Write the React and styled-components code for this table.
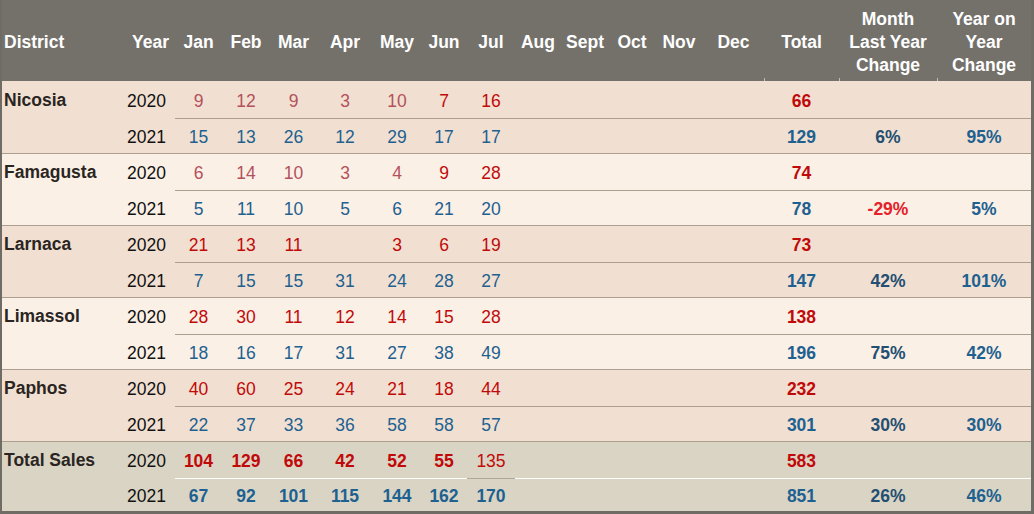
import React from 'react'
import styled, { createGlobalStyle } from 'styled-components'

const GlobalStyle = createGlobalStyle`
    body {
        margin: 0;
        background: #ffffff;
        font-family: "Liberation Sans", Arial, sans-serif;
    }
`

const COLS = '57px 47px 48px 47px 56px 48px 46px 48px 46px 48px 46px 48px 61px 75px 98px 1fr'
const MONTHS = ['Jan', 'Feb', 'Mar', 'Apr', 'May', 'Jun', 'Jul', 'Aug', 'Sept', 'Oct', 'Nov', 'Dec']
const RULE = '#ad9f90'

// tone: m = muted red, r = red, b = blue
const groups = [
    {
        name: 'Nicosia', bg: '#f1e0d1',
        rows: [
            { year: 2020, tone: 'r', cells: [['9', 'm'], ['12', 'm'], ['9', 'm'], ['3', 'm'], ['10', 'm'], '7', '16'], total: '66' },
            { year: 2021, tone: 'b', cells: ['15', '13', '26', '12', '29', '17', '17'], total: '129', mly: '6%', yoy: '95%' },
        ],
    },
    {
        name: 'Famagusta', bg: '#fbf0e6',
        rows: [
            { year: 2020, tone: 'r', cells: [['6', 'm'], ['14', 'm'], ['10', 'm'], ['3', 'm'], ['4', 'm'], '9', '28'], total: '74' },
            { year: 2021, tone: 'b', cells: ['5', '11', '10', '5', '6', '21', '20'], total: '78', mly: '-29%', mlyNeg: true, yoy: '5%' },
        ],
    },
    {
        name: 'Larnaca', bg: '#f1e0d1',
        rows: [
            { year: 2020, tone: 'r', cells: ['21', '13', '11', '', '3', '6', '19'], total: '73' },
            { year: 2021, tone: 'b', cells: ['7', '15', '15', '31', '24', '28', '27'], total: '147', mly: '42%', yoy: '101%' },
        ],
    },
    {
        name: 'Limassol', bg: '#fbf0e6',
        rows: [
            { year: 2020, tone: 'r', cells: ['28', '30', '11', '12', '14', '15', '28'], total: '138' },
            { year: 2021, tone: 'b', cells: ['18', '16', '17', '31', '27', '38', '49'], total: '196', mly: '75%', yoy: '42%' },
        ],
    },
    {
        name: 'Paphos', bg: '#f1e0d1',
        rows: [
            { year: 2020, tone: 'r', cells: ['40', '60', '25', '24', '21', '18', '44'], total: '232' },
            { year: 2021, tone: 'b', cells: ['22', '37', '33', '36', '58', '58', '57'], total: '301', mly: '30%', yoy: '30%' },
        ],
    },
]

const totals = {
    name: 'Total Sales', bg: '#dad4c4', summary: true,
    rows: [
        { year: 2020, tone: 'r', bold: true, cells: ['104', '129', '66', '42', '52', '55', ['135', 'r', false]], total: '583' },
        { year: 2021, tone: 'b', bold: true, cells: ['67', '92', '101', '115', '144', '162', '170'], total: '851', mly: '26%', yoy: '46%' },
    ],
}

const SalesTable = () => {
    return (
        <Frame>
            <HeaderRow>
                <HeadDistrict>District</HeadDistrict>
                <HeadGrid>
                    <HeadYear>Year</HeadYear>
                    {MONTHS.map(m => <HeadCell key={m}>{m}</HeadCell>)}
                    <HeadCell $tick>Total</HeadCell>
                    <HeadCell $tick>Month<br />Last Year<br />Change</HeadCell>
                    <HeadCell $tick>Year on<br />Year<br />Change</HeadCell>
                </HeadGrid>
            </HeaderRow>
            {groups.map((g, i) => <Group key={g.name} group={g} top={i > 0} />)}
            <Group group={totals} top />
        </Frame>
    )
}

const Group = ({ group, top }) => {
    const inner = group.summary ? '#ffffff' : RULE
    return (
        <GroupBox $bg={group.bg} $last={group.summary}>
            <DistrictCell $top={top}>{group.name}</DistrictCell>
            <Rows>
                {group.rows.map((row, i) => {
                    const second = i === 1
                    const line = second ? inner : 'transparent'
                    const months = MONTHS.map((_, idx) => row.cells[idx] ?? '')
                    return (
                        <YearRow key={row.year} $top={!second && top} $grow={second && group.summary}>
                            <YearCell>{row.year}</YearCell>
                            {months.map((c, idx) => {
                                const [text, tone, bold] = Array.isArray(c) ? c : [c, row.tone, row.bold]
                                const cellLine = group.summary && second && idx === 6 ? '#b0a898' : line
                                return (
                                    <Value key={idx} $tone={tone} $bold={bold} $line={cellLine}>{text}</Value>
                                )
                            })}
                            <Value $tone={row.tone} $bold $line={line}>{row.total}</Value>
                            <Value $tone={row.mlyNeg ? 'n' : 'd'} $bold $line={line}>{row.mly}</Value>
                            <Value $tone="b" $bold $line={line}>{row.yoy}</Value>
                        </YearRow>
                    )
                })}
            </Rows>
        </GroupBox>
    )
}

const toneColor = {
    m: '#b4515c',
    r: '#c00a0a',
    b: '#1e6190',
    d: '#244f72',
    n: '#e3222a',
}

const Frame = styled.div`
    width: 1034px;
    height: 514px;
    overflow: hidden;
    display: flex;
    flex-direction: column;
    border-left: 2px solid #6f6c66;
    border-right: 3px solid #6f6c66;
    border-bottom: 3px solid #6f6c66;
    box-sizing: border-box;
    font-size: 17.5px;
    color: #1a1a1a;
`

const HeaderRow = styled.div`
    display: flex;
    height: 81px;
    flex-shrink: 0;
    background: #74716b;
    color: #ffffff;
    font-weight: bold;
`

const HeadDistrict = styled.div`
    width: 116px;
    flex-shrink: 0;
    display: flex;
    align-items: center;
    padding: 3px 0 0 2px;
    box-sizing: border-box;
`

const HeadGrid = styled.div`
    flex: 1;
    display: grid;
    grid-template-columns: ${COLS};
`

const HeadCell = styled.div`
    position: relative;
    display: flex;
    align-items: center;
    justify-content: center;
    text-align: center;
    padding-top: 3px;
    line-height: 23px;
    &::before {
        content: '';
        display: ${p => p.$tick ? 'block' : 'none'};
        position: absolute;
        left: 0;
        bottom: 0;
        width: 1px;
        height: 3px;
        background: #c8bcae;
    }
`

const HeadYear = styled(HeadCell)`
    justify-content: flex-end;
    padding-right: 6px;
`

const GroupBox = styled.div`
    display: flex;
    flex: ${p => p.$last ? '1 1 0' : '0 0 72px'};
    min-height: 0;
    background: ${p => p.$bg};
`

const DistrictCell = styled.div`
    width: 116px;
    flex-shrink: 0;
    padding: 8px 0 0 2px;
    box-sizing: border-box;
    border-top: 1px solid ${p => p.$top ? RULE : 'transparent'};
    font-weight: bold;
    color: #2a2522;
`

const Rows = styled.div`
    flex: 1;
    display: flex;
    flex-direction: column;
`

const YearRow = styled.div`
    display: grid;
    grid-template-columns: ${COLS};
    flex: ${p => p.$grow ? '1 1 0' : '0 0 36px'};
    min-height: 0;
    box-sizing: border-box;
    border-top: 1px solid ${p => p.$top ? RULE : 'transparent'};
`

const YearCell = styled.div`
    display: flex;
    align-items: center;
    justify-content: flex-end;
    padding: 3px 9px 0 0;
    color: #111111;
`

const Value = styled.div`
    display: flex;
    align-items: center;
    justify-content: center;
    padding-top: 2px;
    color: ${p => toneColor[p.$tone] || '#1e6190'};
    font-weight: ${p => p.$bold ? 'bold' : 'normal'};
    border-top: 1px solid ${p => p.$line};
    box-sizing: border-box;
`

const App = () => {
    return (
        <>
            <GlobalStyle />
            <SalesTable />
        </>
    )
}

export default App
